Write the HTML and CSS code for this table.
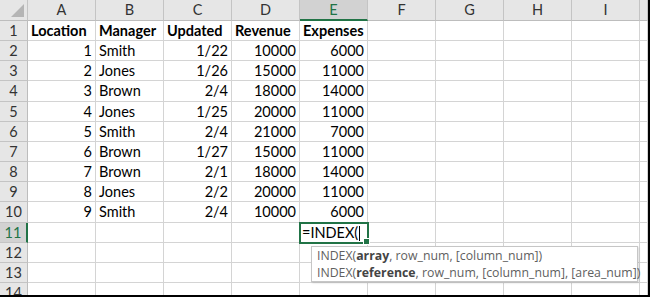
FILE: index.html
```html
<!DOCTYPE html>
<html lang="en">
<head>
  <meta charset="UTF-8" />
  <title>Sheet</title>
  <link rel="stylesheet" href="styles.css">
</head>
<body>
  <div class="frame">
    <div class="sheet" id="sheet"></div>
    <div class="tip">
      <div>INDEX(<b>array</b>, row_num, [column_num])</div>
      <div>INDEX(<b>reference</b>, row_num, [column_num], [area_num])</div>
    </div>
  </div>

  <script>
    const cols = ['A', 'B', 'C', 'D', 'E', 'F', 'G', 'H', 'I', ''];
    const rows = [
      ['Location', 'Manager', 'Updated', 'Revenue', 'Expenses'],
      [1, 'Smith', '1/22', 10000, 6000],
      [2, 'Jones', '1/26', 15000, 11000],
      [3, 'Brown', '2/4', 18000, 14000],
      [4, 'Jones', '1/25', 20000, 11000],
      [5, 'Smith', '2/4', 21000, 7000],
      [6, 'Brown', '1/27', 15000, 11000],
      [7, 'Brown', '2/1', 18000, 14000],
      [8, 'Jones', '2/2', 20000, 11000],
      [9, 'Smith', '2/4', 10000, 6000],
      [],
      [],
      [],
      []
    ];

    let html = '<div class="corner"><span class="tri"></span></div>';
    cols.forEach(c => {
      html += `<div class="col-head${c === 'E' ? ' active' : ''}">${c}</div>`;
    });

    rows.forEach((r, i) => {
      const n = i + 1;
      html += `<div class="row-head${n === 11 ? ' active' : ''}">${n}</div>`;
      cols.forEach((c, j) => {
        let v = r[j] === undefined ? '' : r[j];
        let cls = 'cell';
        if (n === 1) cls += ' bold';
        else if (j !== 1) cls += ' num';
        if (n === 11 && c === 'E') {
          html += `<div class="cell editing">=INDEX(<span class="caret"></span><span class="handle"></span></div>`;
          return;
        }
        html += `<div class="${cls}">${v}</div>`;
      });
    });

    document.getElementById('sheet').innerHTML = html;
  </script>
</body>
</html>
```

FILE: styles.css
```css
:root {
  --green: #217346;
  --grid: #d4d4d4;
  --head-bg: #e6e6e6;
  --head-line: #c4c4c4;
}

* {
  box-sizing: border-box;
}

body {
  margin: 0;
  background: #000;
}

.frame {
  position: relative;
  width: 648px;
  height: 295px;
  background: #fff;
  overflow: hidden;
}

.sheet {
  display: grid;
  grid-template-columns: 28px repeat(9, 68px) 8px;
  grid-template-rows: 20.8px;
  grid-auto-rows: 20.2px;
  font-family: Lato, "Liberation Sans", sans-serif;
  font-size: 14.5px;
  color: #000;
}

.corner {
  position: relative;
  background: var(--head-bg);
  border-right: 1px solid var(--head-line);
  border-bottom: 1px solid #bdbdbd;
}

.tri {
  position: absolute;
  right: 3px;
  bottom: 3px;
  width: 0;
  height: 0;
  border-left: 13px solid transparent;
  border-bottom: 13px solid #b5b5b5;
}

.col-head {
  background: var(--head-bg);
  border-right: 1px solid var(--head-line);
  border-bottom: 1px solid #bdbdbd;
  text-align: center;
  line-height: 20px;
  color: #333;
}

.col-head.active {
  background: #d2d2d2;
  color: var(--green);
  border-bottom: 2px solid var(--green);
}

.row-head {
  background: var(--head-bg);
  border-right: 1px solid #bdbdbd;
  border-bottom: 1px solid var(--head-line);
  text-align: center;
  line-height: 20px;
  color: #333;
}

.row-head.active {
  background: #d2d2d2;
  color: var(--green);
  border-right: 2px solid var(--green);
}

.cell {
  border-right: 1px solid var(--grid);
  border-bottom: 1px solid var(--grid);
  padding: 0 3px;
  line-height: 20px;
  white-space: nowrap;
  overflow: hidden;
}

.cell.num {
  text-align: right;
}

.cell.bold {
  font-weight: 700;
}

.cell.editing {
  position: relative;
  overflow: visible;
  outline: 2px solid var(--green);
  outline-offset: -1px;
  padding-left: 2px;
  z-index: 2;
}

.caret {
  display: inline-block;
  width: 1px;
  height: 15px;
  margin-left: 1px;
  vertical-align: -3px;
  background: #000;
}

.handle {
  position: absolute;
  right: -3px;
  bottom: -3px;
  width: 5px;
  height: 5px;
  background: var(--green);
  border: 1px solid #fff;
  box-sizing: content-box;
}

.tip {
  position: absolute;
  left: 311px;
  top: 246px;
  width: 327px;
  height: 36px;
  padding: 1px 5px;
  background: #fff;
  border: 1px solid #c6c6c6;
  box-shadow: 1px 1px 2px rgba(0, 0, 0, 0.15);
  font-family: "Open Sans", "Noto Sans", sans-serif;
  font-size: 12.3px;
  line-height: 16.5px;
  color: #5f5f5f;
  white-space: nowrap;
  z-index: 3;
}

.tip b {
  color: #444;
}
```
